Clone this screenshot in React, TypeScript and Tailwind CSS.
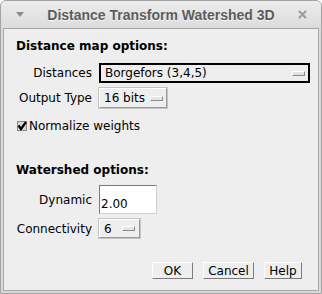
const font = { fontFamily: '"DejaVu Sans", sans-serif' };

function Indicator() {
  return (
    <span className="block h-[5px] w-[13px] border-t border-l border-t-white border-l-white border-b border-r border-b-[#8a8a8a] border-r-[#8a8a8a] bg-[#e4e4e4]" />
  );
}

function Choice({ value, width, focused }: { value: string; width: string; focused?: boolean }) {
  return (
    <div
      className={`flex h-[20px] items-center justify-between pl-[4px] pr-[3px] ${width} ${
        focused
          ? 'border-2 border-black bg-[#eeeeee]'
          : 'border border-t-white border-l-white border-b-[#9a9a9a] border-r-[#9a9a9a] bg-[#eeeeee] outline outline-1 outline-[#c4c4c4]'
      }`}
    >
      <span className="leading-[14px]">{value}</span>
      <Indicator />
    </div>
  );
}

function Button({ label, width }: { label: string; width: string }) {
  return (
    <button
      className={`h-[17px] ${width} border border-t-white border-l-white border-b-[#7c7c7c] border-r-[#7c7c7c] bg-[#eeeeee] text-[12px] leading-[14px] text-black`}
      style={font}
    >
      {label}
    </button>
  );
}

export default function App() {
  return (
    <div className="h-[294px] w-[322px] overflow-hidden bg-white">
      <div className="flex h-full w-full flex-col rounded-t-[6px] border border-[#a4a4a4] bg-[#d9d9d9]">
        <div className="relative flex h-[27px] shrink-0 items-center justify-center rounded-t-[5px] bg-gradient-to-b from-[#ececec] to-[#dcdcdc]">
          <svg className="absolute left-[14px] top-[10px]" width="10" height="7" viewBox="0 0 10 7">
            <path d="M1 1 L9 1 L5 6 Z" fill="#8c8c8c" />
          </svg>
          <span
            className="text-[14px] font-bold leading-[16px] text-[#5c5c5c] [text-shadow:0_1px_0_#f6f6f6]"
            style={{ fontFamily: '"Liberation Sans", Arial, sans-serif' }}
          >
            Distance Transform Watershed 3D
          </span>
          <svg className="absolute right-[14px] top-[9px]" width="9" height="9" viewBox="0 0 9 9">
            <path d="M1.5 1.5 L7.5 7.5 M7.5 1.5 L1.5 7.5" stroke="#9a9a9a" strokeWidth="2" strokeLinecap="round" />
          </svg>
        </div>
        <div className="mx-[2px] mb-[2px] flex-1 border border-[#a8a8a8] bg-[#eeeeee] pl-[12px] pt-[10px] text-[12px] text-black" style={font}>
          <div className="font-bold leading-[14px]">Distance map options:</div>

          <div className="mt-[10px] grid grid-cols-[76px_1fr] items-center gap-x-[7px]">
            <span className="justify-self-end leading-[14px]">Distances</span>
            <Choice value="Borgefors (3,4,5)" width="w-[211px]" focused />
            <span className="mt-[5px] justify-self-end leading-[14px]">Output Type</span>
            <div className="mt-[5px]">
              <Choice value="16 bits" width="w-[68px]" />
            </div>
          </div>

          <div className="mt-[11px] flex items-center gap-[2px] pl-[1px] leading-[14px]">
            <svg width="10" height="10" viewBox="0 0 10 10">
              <rect x="0.5" y="0.5" width="9" height="9" fill="#d8d8d8" stroke="#8a8a8a" />
              <path d="M1.5 4.5 L4 8 L9 1" stroke="#000" strokeWidth="2.2" fill="none" />
            </svg>
            <span>Normalize weights</span>
          </div>

          <div className="mt-[30px] font-bold leading-[14px]">Watershed options:</div>

          <div className="mt-[8px] grid grid-cols-[76px_1fr] items-center gap-x-[7px]">
            <span className="justify-self-end leading-[14px]">Dynamic</span>
            <div className="flex h-[29px] w-[58px] items-end border border-t-[#7a7a7a] border-l-[#7a7a7a] border-b-[#d0d0d0] border-r-[#d0d0d0] bg-white pb-[2px] pl-[1px] leading-[14px]">
              2.00
            </div>
            <span className="mt-[5px] justify-self-end leading-[14px]">Connectivity</span>
            <div className="mt-[5px]">
              <div className="flex h-[19px] w-[41px] items-center justify-between border border-t-white border-l-white border-b-[#9a9a9a] border-r-[#9a9a9a] bg-[#eeeeee] pl-[4px] pr-[4px] outline outline-1 outline-[#c4c4c4]">
                <span className="leading-[14px]">6</span>
                <Indicator />
              </div>
            </div>
          </div>

          <div className="mt-[24px] flex justify-end gap-[10px] pr-[16px]">
            <Button label="OK" width="w-[41px]" />
            <Button label="Cancel" width="w-[51px]" />
            <Button label="Help" width="w-[38px]" />
          </div>
        </div>
      </div>
    </div>
  );
}
